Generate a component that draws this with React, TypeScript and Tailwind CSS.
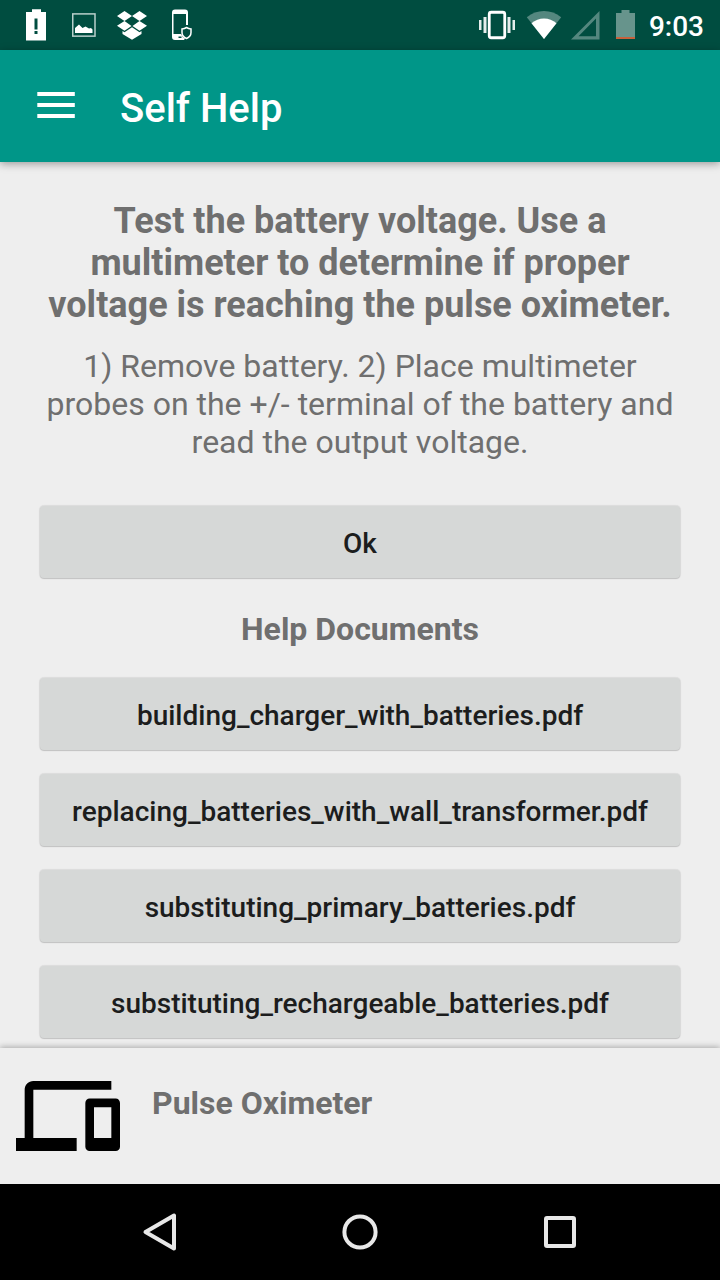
import React from "react";

const documents: string[] = [
  "building_charger_with_batteries.pdf",
  "replacing_batteries_with_wall_transformer.pdf",
  "substituting_primary_batteries.pdf",
  "substituting_rechargeable_batteries.pdf",
];

function StatusBar() {
  return (
    <div className="flex h-[50px] shrink-0 items-center justify-between bg-[#004d40] pr-4 text-white">
      <svg width="200" height="50" viewBox="0 0 200 50" fill="currentColor" aria-hidden="true">
        <path
          fillRule="evenodd"
          d="M32 9.300h9v2.700h5v28.500H26V12h6zM34.500 18.500v11h3v-11zM34.500 31v3h3v-3z"
        />
        <rect x="72.750" y="13.900" width="22.250" height="22.250" fill="none" stroke="#b8cfcb" strokeWidth="1.500" />
        <path d="M75 33v-5l4-3.500 3.500 3.500 3-1.500 3.500 2 2-.5 1.500 1.500V33z" />
        <path d="M124.500 11l7.500 5-7.500 5-7.500-5zM139.500 11l7.500 5-7.500 5-7.500-5zM124.500 21l7 5-7 4.700-7.500-5zM139.500 21l7.500 4.700-7.500 5-7-4.700zM132 27.300l7.500 5 2-1.300v3l-9.500 5.700-9.500-5.700v-3l2 1.300z" />
        <path
          fillRule="evenodd"
          d="M175 9.500h10q3 0 3 3V25h-2V14h-12.500v20H181q1 3 4 4.500l-1 1.500h-9q-3 0-3-3V12.500q0-3 3-3zM178.500 36.500v1.500h3v-1.500z"
        />
        <path
          d="M186.500 27.500q2 1.200 4.500 1.500v3.500q0 4-4.500 6-4.500-2-4.500-6V29q2.500-.3 4.500-1.500z"
          fill="#004d40"
          stroke="currentColor"
          strokeWidth="1.500"
        />
      </svg>
      <div className="flex items-center">
        <svg width="170" height="50" viewBox="476 0 170 50" fill="currentColor" aria-hidden="true">
          <rect x="489.250" y="12.250" width="15.500" height="25.500" rx="2" fill="none" stroke="currentColor" strokeWidth="2.800" />
          <path d="M479 20h2.500v10H479zM483.500 17h3v16h-3zM507.500 17h3v16h-3zM512.500 20h2.500v10h-2.500z" opacity=".9" />
          <path d="M544 39L526.800 17.200Q534.500 11 544 11t17.200 6.200z" opacity=".33" />
          <path d="M544 39L531.500 23.200Q537 18.500 544 18.500t12.500 4.700z" />
          <path fillRule="evenodd" d="M571 39.500L599.500 11v28.500zM578.500 36.200H596V18.500z" opacity=".33" />
          <path d="M621.500 10h8v3h5.500v24h-19V13h5.500z" fill="#67948c" />
          <path d="M616 37h19v2h-19z" fill="#c7613b" />
        </svg>
        <span className="w-[58px] pt-1 text-right text-[28px] leading-8 font-medium">9:03</span>
      </div>
    </div>
  );
}

function ActionButton({ children }: { children: React.ReactNode }) {
  return (
    <button
      type="button"
      className="flex h-[72px] w-full shrink-0 items-center justify-center rounded-[4px] bg-[#d6d8d7] pt-1 text-[28px] leading-8 font-medium text-[#1c1d1d] shadow-[0_0_1px_1px_rgba(0,0,0,0.08),0_1px_1px_rgba(0,0,0,0.12)]"
    >
      {children}
    </button>
  );
}

export default function App() {
  return (
    <div className="flex h-dvh flex-col bg-[#eeeeee] font-[Roboto,sans-serif] text-[#6f6f6f]">
      <StatusBar />
      <header className="relative z-10 flex h-28 shrink-0 items-center bg-[#009688] pl-9 text-white shadow-[0_2px_8px_rgba(0,0,0,0.35)]">
        <button type="button" aria-label="Open menu" className="flex h-10 w-10 items-center">
          <svg width="40" height="40" viewBox="0 0 40 40" aria-hidden="true">
            <path d="M1.300 6h37.500v4H1.300zM1.300 17h37.500v4H1.300zM1.300 28h37.500v4H1.300z" fill="currentColor" />
          </svg>
        </button>
        <h1 className="ml-11 pt-1.5 text-[40px] leading-12 font-medium">Self Help</h1>
      </header>

      <main className="flex min-h-0 flex-1 flex-col overflow-hidden px-10 pt-[38px] text-center">
        <h2 className="text-[36px] leading-[42px] font-bold">
          Test the battery voltage. Use a multimeter to determine if proper voltage is reaching the pulse oximeter.
        </h2>
        <p className="mt-[21px] text-[32px] leading-[38px]">
          1) Remove battery. 2) Place multimeter probes on the +/- terminal of the battery and read the output voltage.
        </p>
        <div className="mt-[45px] flex">
          <ActionButton>Ok</ActionButton>
        </div>
        <h3 className="mt-8 text-[32px] leading-[38px] font-bold">Help Documents</h3>
        <ul className="mt-[30px] flex flex-col gap-6">
          {documents.map((name) => (
            <li key={name}>
              <ActionButton>{name}</ActionButton>
            </li>
          ))}
        </ul>
      </main>

      <footer className="relative z-10 flex h-[136px] shrink-0 items-start bg-[#eeeeee] px-4 shadow-[0_-1px_6px_rgba(0,0,0,0.3)]">
        <svg className="mt-[33px]" width="104" height="70" viewBox="0 4 24 16" preserveAspectRatio="none" fill="#000000" aria-hidden="true">
          <path d="M4 6h18V4H4c-1.100 0-2 .9-2 2v11H0v3h14v-3H4V6zm19 2h-6c-.55 0-1 .45-1 1v10c0 .55.45 1 1 1h6c.55 0 1-.45 1-1V9c0-.55-.45-1-1-1zm-1 9h-4v-7h4v7z" />
        </svg>
        <h3 className="mt-9 ml-8 text-[32px] leading-[38px] font-bold">Pulse Oximeter</h3>
      </footer>

      <nav className="flex h-24 shrink-0 items-center justify-center gap-[152px] bg-black text-[#e8e8e8]">
        <button type="button" aria-label="Back">
          <svg width="48" height="48" viewBox="0 0 48 48" fill="none" stroke="currentColor" strokeWidth="4" strokeLinejoin="round" aria-hidden="true">
            <path d="M38 7.500v33L9.500 24z" />
          </svg>
        </button>
        <button type="button" aria-label="Home">
          <svg width="48" height="48" viewBox="0 0 48 48" fill="none" stroke="currentColor" strokeWidth="4" aria-hidden="true">
            <circle cx="24" cy="24" r="15.600" />
          </svg>
        </button>
        <button type="button" aria-label="Recent apps">
          <svg width="48" height="48" viewBox="0 0 48 48" fill="none" stroke="currentColor" strokeWidth="4" aria-hidden="true">
            <rect x="10" y="10" width="28" height="28" rx="1" />
          </svg>
        </button>
      </nav>
    </div>
  );
}
